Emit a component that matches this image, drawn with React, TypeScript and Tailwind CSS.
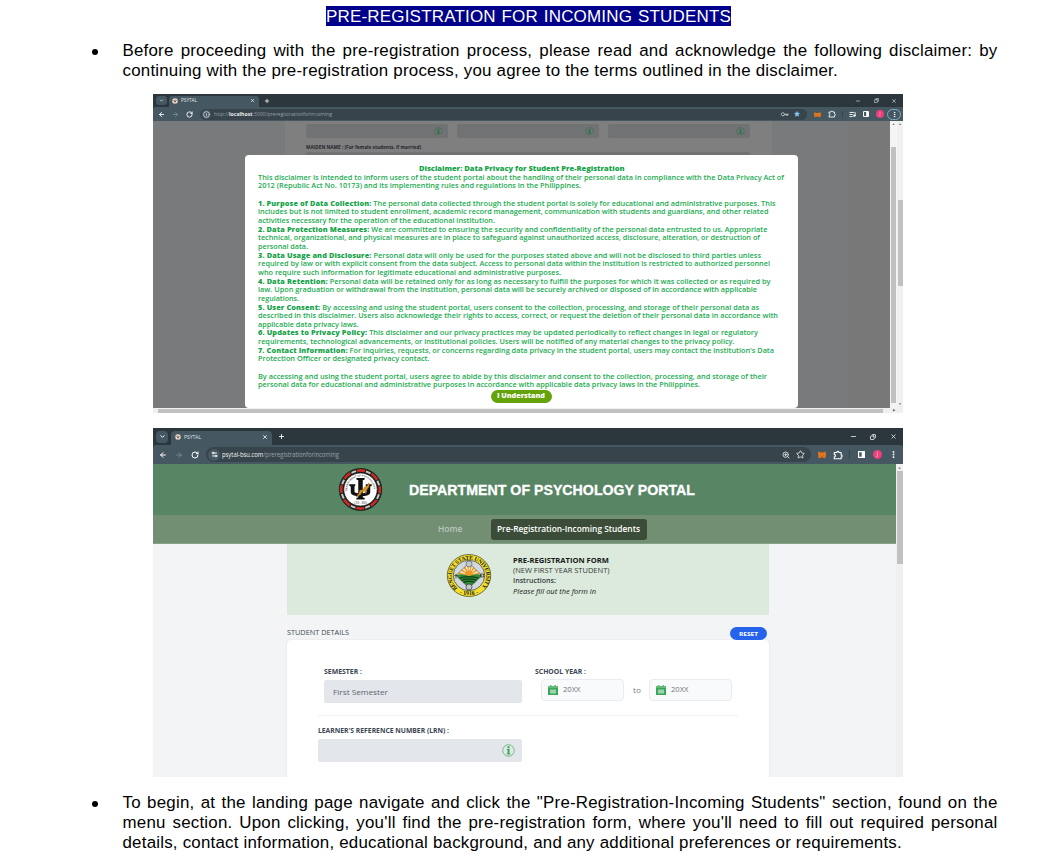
import { useLayoutEffect, useRef, type ReactNode } from "react";
import {
  ArrowLeft, ArrowRight, ChevronDown, Copy, Info, Key, ListMusic, Minus,
  MoreVertical, Plus, RotateCw, Settings2, Star, X, ZoomIn,
} from "lucide-react";

/** One line of text, stretched horizontally to the given width. */
function Fit({ w, className = "", children }: { w: number; className?: string; children: ReactNode }) {
  const ref = useRef<HTMLSpanElement>(null);
  useLayoutEffect(() => {
    const el = ref.current;
    if (!el) return;
    el.style.transform = "none";
    const natural = el.getBoundingClientRect().width;
    if (natural > 0) el.style.transform = `scaleX(${w / natural})`;
  }, [w]);
  return (
    <span className={`block shrink-0 ${className}`} style={{ width: w }}>
      <span ref={ref} className="inline-block origin-left whitespace-pre align-top">
        {children}
      </span>
    </span>
  );
}

const disclaimer: [string, string, number][] = [
  ["", "This disclaimer is intended to inform users of the student portal about the handling of their personal data in compliance with the Data Privacy Act of", 526],
  ["", "2012 (Republic Act No. 10173) and its implementing rules and regulations in the Philippines.", 323],
  ["", "", 0],
  ["1. Purpose of Data Collection:", " The personal data collected through the student portal is solely for educational and administrative purposes. This", 517.5],
  ["", "includes but is not limited to student enrollment, academic record management, communication with students and guardians, and other related", 510.5],
  ["", "activities necessary for the operation of the educational institution.", 237],
  ["2. Data Protection Measures:", " We are committed to ensuring the security and confidentiality of the personal data entrusted to us. Appropriate", 509.5],
  ["", "technical, organizational, and physical measures are in place to safeguard against unauthorized access, disclosure, alteration, or destruction of", 502],
  ["", "personal data.", 50],
  ["3. Data Usage and Disclosure:", " Personal data will only be used for the purposes stated above and will not be disclosed to third parties unless", 503],
  ["", "required by law or with explicit consent from the data subject. Access to personal data within the institution is restricted to authorized personnel", 512],
  ["", "who require such information for legitimate educational and administrative purposes.", 303],
  ["4. Data Retention:", " Personal data will be retained only for as long as necessary to fulfill the purposes for which it was collected or as required by", 512.5],
  ["", "law. Upon graduation or withdrawal from the institution, personal data will be securely archived or disposed of in accordance with applicable", 499],
  ["", "regulations.", 41],
  ["5. User Consent:", " By accessing and using the student portal, users consent to the collection, processing, and storage of their personal data as", 501],
  ["", "described in this disclaimer. Users also acknowledge their rights to access, correct, or request the deletion of their personal data in accordance with", 520],
  ["", "applicable data privacy laws.", 100.5],
  ["6. Updates to Privacy Policy:", " This disclaimer and our privacy practices may be updated periodically to reflect changes in legal or regulatory", 500],
  ["", "requirements, technological advancements, or institutional policies. Users will be notified of any material changes to the privacy policy.", 476.5],
  ["7. Contact Information:", " For inquiries, requests, or concerns regarding data privacy in the student portal, users may contact the institution's Data", 516],
  ["", "Protection Officer or designated privacy contact.", 171.5],
  ["", "", 0],
  ["", "By accessing and using the student portal, users agree to abide by this disclaimer and consent to the collection, processing, and storage of their", 509],
  ["", "personal data for educational and administrative purposes in accordance with applicable data privacy laws in the Philippines.", 442],
];

function FoxIcon({ className }: { className: string }) {
  return (
    <svg viewBox="0 0 16 14" preserveAspectRatio="none" className={className}>
      <path d="M1 1l5 2h4l5-2 1 6-1 3 1 3-4 1-2-1H6l-2 1-4-1 1-3-1-3z" fill="#e8761b" />
      <path d="M4 7l2 1-2 1zM12 7l-2 1 2 1zM6 11h4l-1 2H7z" fill="#9a4c12" />
    </svg>
  );
}

function ExtensionIcon({ className }: { className: string }) {
  return (
    <svg viewBox="0 0 16 16" className={className}>
      <path d="M2 4h4a1.800 1.800 0 0 1 3.600 0H13v3.800a1.700 1.700 0 0 1 0 3.400V14H2v-3a2 2 0 0 0 0-4z" fill="none" stroke="currentColor" strokeWidth="1.700" strokeLinejoin="round" />
    </svg>
  );
}

function SidePanelIcon({ className }: { className: string }) {
  return (
    <svg viewBox="0 0 8 8" className={className}>
      <path d="M.7.7h6.600v6.600H.7z" fill="none" stroke="#fff" strokeWidth="1.300" />
      <path d="M4.200 1h3v6h-3z" fill="#fff" />
    </svg>
  );
}

function Favicon({ className }: { className: string }) {
  return (
    <svg viewBox="0 0 12 12" className={className}>
      <circle cx="6" cy="6" r="5.4" fill="#fff" stroke="#b5877c" strokeWidth="1.2" />
      <path d="M6 2.5v7M3.5 4v1.5q0 1.5 2.5 1.5t2.5-1.5V4" stroke="#5a3b20" strokeWidth="1.5" fill="none" />
    </svg>
  );
}

function InfoBadge({ className }: { className: string }) {
  return (
    <svg viewBox="0 0 14 14" preserveAspectRatio="none" className={className}>
      <circle cx="7" cy="7" r="6.2" fill="none" stroke="currentColor" strokeWidth="0.7" />
      <path d="M5.2 5.400h2.900v4.800h.9v1.100H5.100v-1.100h.9V6.500h-.8zM5.900 2.500h2.200v2H5.900z" fill="currentColor" />
    </svg>
  );
}

function PsychologySeal() {
  return (
    <svg viewBox="0 0 60 58" preserveAspectRatio="none" className="h-[43px] w-[45px]">
      <defs>
        <path id="dept" d="M12.500 31a17.600 17.600 0 1 1 35 0" />
      </defs>
      <circle cx="30" cy="29" r="28.500" fill="#20201f" />
      <circle cx="30" cy="29" r="25.800" fill="none" stroke="#c92a22" strokeWidth="3.600" strokeDasharray="11 9.260" strokeDashoffset="5.500" />
      <circle cx="30" cy="29" r="25.400" fill="none" stroke="#c9c8c3" strokeWidth="2.600" strokeDasharray="6.500 13.450" strokeDashoffset="-6.700" />
      <circle cx="30" cy="29" r="28.300" fill="none" stroke="#1d2a22" strokeWidth="1.200" />
      <circle cx="30" cy="29" r="22.300" fill="#fff" stroke="#111" strokeWidth="1" />
      <text fill="#555" fontSize="3.400" fontFamily="Liberation Sans" fontWeight="700">
        <textPath href="#dept" textLength="56">DEPARTMENT OF PSYCHOLOGY</textPath>
      </text>
      <text x="30" y="48.500" textAnchor="middle" fill="#555" fontSize="3.600" fontFamily="Liberation Sans">CSS - BSU</text>
      <path d="M24.500 13.500h11v2l-2.500 1v23l2.500 1v2h-11v-2l2.500-1v-23l-2.500-1z" fill="#111" />
      <path d="M15 22h8v2l-1 1v7q0 2 8 2t8-2v-7l-1-1v-2h8v2l-2 1v8q0 5-13 5t-13-5v-8l-2-1z" fill="#111" />
      <path d="M41 20l-2 4-4 2-1 3-5 1-1 4-4 5 6-3 2-4 4-1 1 4 1-5 3-4 1-4z" fill="#d9951f" stroke="#8a5a10" strokeWidth="0.500" />
    </svg>
  );
}

function UniversitySeal() {
  return (
    <svg viewBox="0 0 60 58" preserveAspectRatio="none" className="h-[43px] w-[46px]">
      <defs>
        <path id="uni" d="M15 46.500a22.300 22.300 0 1 1 30 0" />
        <clipPath id="diamond"><path d="M30 12L47 29 30 46 13 29z" /></clipPath>
      </defs>
      <circle cx="30" cy="29" r="28.300" fill="#f4df2b" stroke="#4a4a20" strokeWidth="1" />
      <circle cx="30" cy="29" r="20.500" fill="#d0d9e0" stroke="#444" strokeWidth="1" />
      <text fill="#222" fontSize="7.600" fontFamily="Liberation Serif" fontWeight="700">
        <textPath href="#uni" textLength="104">BENGUET STATE UNIVERSITY</textPath>
      </text>
      <text x="30" y="55.500" textAnchor="middle" fill="#222" fontSize="7.500" fontFamily="Liberation Serif" fontWeight="700">· 1916 ·</text>
      <g clipPath="url(#diamond)">
        <rect x="12" y="10" width="36" height="38" fill="#f4f0e2" />
        <path d="M30 29L13 27v-4zM30 29L14 20l3-4zM30 29L19 13l4-3zM30 29L26 9h3zM30 29L32 9h4zM30 29L38 11l4 3zM30 29L44 16l3 4zM30 29L48 23v4z" fill="#f0a02e" />
        <circle cx="30" cy="27" r="5" fill="#ef9726" />
        <path d="M12 29q9-4 18 1 9-5 18-1v19H12z" fill="#2e8b34" />
        <path d="M16 33q14-5 28 0M18 36q12-5 24 0M21 39q9-5 18 0" stroke="#123f18" strokeWidth="1.600" fill="none" />
      </g>
      <path d="M30 12L47 29 30 46 13 29z" fill="none" stroke="#555" strokeWidth="0.800" />
      <circle cx="30" cy="13.500" r="4" fill="#c2c7ca" stroke="#555" strokeWidth="0.800" />
      <circle cx="30" cy="44.500" r="4" fill="#c2c7ca" stroke="#333" strokeWidth="0.900" />
      <path d="M13 27v6M11 29h4M45 27h4v4h-4z" stroke="#333" strokeWidth="1" fill="none" />
    </svg>
  );
}

function SmallBrowserBar() {
  return (
    <div className="h-[27px] bg-[#2b373d] text-white">
      <div className="flex h-[13px] items-center">
        <div className="ml-[3px] flex h-[9px] w-[11px] items-center justify-center rounded-[3px] bg-[#455862]"><ChevronDown className="size-[5px]" strokeWidth={3} /></div>
        <div className="mt-[2px] ml-[2px] flex h-[11px] w-[90px] items-center rounded-t-[3px] bg-[#455862] pb-[2px]">
          <Favicon className="ml-[3px] size-[6px]" />
          <Fit w={16} className="ml-[3px] text-[5px] leading-[7px] text-[#e1e5e7]">PSYTAL</Fit>
          <X className="ml-[53px] size-[5px]" strokeWidth={3} />
        </div>
        <Plus className="ml-[5px] size-[6px]" strokeWidth={3} />
        <Minus className="ml-[585px] size-[6px]" />
        <Copy className="ml-[13px] size-[5px] -scale-x-100" strokeWidth={2.500} />
        <X className="ml-[12px] size-[6px]" />
      </div>
      <div className="flex h-[14px] items-center rounded-t-[2px] bg-[#455862]">
        <ArrowLeft className="ml-[5px] size-[7px]" strokeWidth={3} />
        <ArrowRight className="ml-[7px] size-[7px] text-[#93a2aa]" />
        <RotateCw className="ml-[7px] size-[7px]" strokeWidth={3} />
        <div className="ml-[7px] flex h-[11px] w-[607px] items-center rounded-full bg-[#37444b]">
          <div className="ml-[2px] flex size-[9px] items-center justify-center rounded-full bg-[#455862]"><Info className="size-[7px] text-[#e1e5e7]" strokeWidth={2.500} /></div>
          <Fit w={118} className="ml-[3px] text-[5px] leading-[7px] text-[#94a1a8]">http://<b className="text-[#e6eaec]">localhost</b>:3000/preregistrationforincoming</Fit>
          <Key className="ml-[449px] size-[7px] rotate-45 text-[#b7c0c5]" strokeWidth={3} />
          <Star className="ml-[6px] size-[6px] fill-[#7cc7e8] text-[#7cc7e8]" />
        </div>
        <FoxIcon className="ml-[7px] h-[5px] w-[7px]" />
        <ExtensionIcon className="ml-[7px] size-[8px]" />
        <div className="ml-[6px] h-[7px] w-px bg-[#37444b]" />
        <ListMusic className="ml-[6px] size-[7px]" strokeWidth={3} />
        <SidePanelIcon className="ml-[7px] size-[6px]" />
        <div className="ml-[7px] flex size-[8px] items-center justify-center rounded-full bg-[#ec407a] text-[4px]">J</div>
        <div className="ml-[3px] flex h-[11px] w-[14px] items-center justify-center rounded-full border border-[#7fb0c0]"><MoreVertical className="size-[7px]" strokeWidth={3} /></div>
      </div>
    </div>
  );
}

function DimField({ className }: { className: string }) {
  return (
    <div className={`flex items-center justify-end rounded-[2px] bg-[#707274] ${className}`}>
      <InfoBadge className="mr-[5px] h-[8px] w-[9px] text-[#21753f]" />
    </div>
  );
}

function DisclaimerShot() {
  return (
    <div className="relative ml-[153px] h-[319px] w-[750px] overflow-hidden font-['Open_Sans',sans-serif]">
      <SmallBrowserBar />
      <div className="flex h-[287px]">
        <div className="w-[132px] bg-[#797a7c]" />
        <div className="w-[487px] bg-[#7f7f7f] pt-[3px] pl-[21px]">
          <div className="flex gap-[9px]">
            <DimField className="h-[14px] w-[142px]" />
            <DimField className="h-[14px] w-[142px]" />
            <DimField className="h-[14px] w-[142px]" />
          </div>
          <Fit w={115} className="mt-[5px] text-[5px] leading-[8px] font-bold text-[#23272c]">MAIDEN NAME : (For female students, if married)</Fit>
          <div className="mt-[1px] h-[14px] w-[444px] rounded-[2px] bg-[#707274]" />
        </div>
        <div className="w-[76px] bg-[#797a7c]" />
        <div className="w-[42px] bg-[#787878]" />
        <div className="w-[7px] bg-[#f4f4f4]">
          <div className="flex h-[6px] items-center justify-center text-[3px] text-[#555]">▲</div>
          <div className="mx-auto mt-[20px] h-[256px] w-[5px] bg-[#c1c1c1]" />
        </div>
        <div className="w-[6px] bg-[#f0f0f0]">
          <div className="flex h-[6px] items-center justify-center text-[3px] text-[#555]">▲</div>
          <div className="mx-auto mt-[73px] h-[86px] w-[5px] bg-[#c1c1c1]" />
          <div className="mt-[115px] flex h-[6px] items-center justify-center text-[3px] text-[#555]">▼</div>
        </div>
      </div>
      <div className="flex h-[5px] items-center justify-between bg-[#f0f0f0] pr-[8px] pl-[5px]">
        <div className="h-[4px] w-[725px] bg-[#c1c1c1]" />
        <span className="text-[3px] text-[#555]">▶</span>
      </div>
      <div className="absolute top-[61px] left-[92px] flex h-[253px] w-[553px] flex-col rounded-[4px] bg-white pt-[10px] pl-[12.600px] text-[6.200px] leading-[8.660px] font-semibold text-[#22ab51]">
        <Fit w={205.500} className="ml-[161px] h-[8.660px] font-extrabold text-[#16a34a]">Disclaimer: Data Privacy for Student Pre-Registration</Fit>
        {disclaimer.map(([head, text, w], i) => (
          <div key={i} className="h-[8.660px] shrink-0">
            {w > 0 && <Fit w={w}>{head && <b className="font-extrabold tracking-[0.08px] text-[#16a34a]">{head}</b>}{text}</Fit>}
          </div>
        ))}
        <button className="-mt-[0.500px] ml-[233.400px] flex h-[13.500px] w-[61px] shrink-0 items-center justify-center rounded-full bg-[#65a30d] font-extrabold text-white">
          <Fit w={48} className="text-left">I Understand</Fit>
        </button>
      </div>
    </div>
  );
}

function BrowserBar() {
  return (
    <div className="h-[36px] bg-[#2b373d] text-white">
      <div className="flex h-[17px] items-center">
        <div className="ml-[3px] flex h-[12px] w-[12px] items-center justify-center rounded-[4px] bg-[#455862]"><ChevronDown className="size-[7px]" strokeWidth={3} /></div>
        <div className="mt-[3px] ml-[3px] flex h-[14px] w-[101px] items-center rounded-t-[4px] bg-[#455862] pb-[3px]">
          <Favicon className="ml-[4px] size-[6px]" />
          <Fit w={17} className="ml-[3px] text-[6px] leading-[8px] text-[#dfe4e6]">PSYTAL</Fit>
          <X className="ml-[61px] size-[6px]" strokeWidth={3} />
        </div>
        <Plus className="ml-[6px] size-[7px]" strokeWidth={3} />
        <Minus className="ml-[565px] size-[7px]" strokeWidth={2.500} />
        <Copy className="ml-[13px] size-[6px] -scale-x-100" strokeWidth={3} />
        <X className="ml-[14px] size-[7px]" strokeWidth={2.500} />
      </div>
      <div className="flex h-[19px] items-center rounded-t-[3px] bg-[#455862]">
        <ArrowLeft className="ml-[6px] size-[8px]" strokeWidth={3} />
        <ArrowRight className="ml-[8px] size-[8px] text-[#8d9ba2]" />
        <RotateCw className="ml-[8px] size-[8px]" strokeWidth={3} />
        <div className="ml-[7px] flex h-[15px] w-[605px] items-center rounded-full bg-[#37444b]">
          <div className="ml-[2px] flex size-[12px] items-center justify-center rounded-full bg-[#455862]"><Settings2 className="size-[7px]" strokeWidth={3} /></div>
          <Fit w={117} className="ml-[2px] text-[7px] leading-[10px] text-[#98a4aa]"><span className="text-[#f1f3f4]">psytal-bsu.com</span>/preregistrationforincoming</Fit>
          <ZoomIn className="ml-[443px] size-[8px] text-[#ced5d8]" strokeWidth={3} />
          <Star className="ml-[6px] size-[9px]" />
        </div>
        <FoxIcon className="ml-[7px] h-[7px] w-[8px]" />
        <ExtensionIcon className="ml-[7px] size-[10px]" />
        <div className="ml-[6px] h-[9px] w-px bg-[#37444b]" />
        <SidePanelIcon className="ml-[8px] size-[7px]" />
        <div className="ml-[8px] flex size-[9px] items-center justify-center rounded-full bg-[#ec407a] text-[5px]">J</div>
        <MoreVertical className="ml-[7px] size-[9px]" strokeWidth={3} />
      </div>
    </div>
  );
}

function YearInput() {
  return (
    <div className="flex h-[22px] w-[83px] items-center rounded-[4px] border border-[#e9ebee] bg-[#f9fafb]">
      <svg viewBox="0 0 10 10" className="ml-[6px] size-[10px]">
        <path d="M0 1h2V0h1.500v1h3V0H8v1h2v2H0z" fill="#63ba79" /><path d="M0 3h10v7H0z" fill="#3aa55a" /><path d="M2 4.500h6v4H2z" fill="#9fd3ab" />
      </svg>
      <Fit w={17.500} className="ml-[5px] text-[7px] leading-[10px] font-normal text-[#6f7681]">20XX</Fit>
    </div>
  );
}

function PortalShot() {
  return (
    <div className="mt-[15px] ml-[153px] h-[349px] w-[750px] overflow-hidden font-['Open_Sans',sans-serif]">
      <BrowserBar />
      <div className="flex h-[313px]">
        <div className="w-[743px] bg-[#f3f4f6]">
          <header className="flex h-[51px] items-center bg-[#588564]">
            <div className="ml-[185px]"><PsychologySeal /></div>
            <Fit w={286} className="ml-[26px] font-['Liberation_Sans',sans-serif] text-[14.500px] leading-[20px] font-bold text-white [-webkit-text-stroke:0.300px_white]">DEPARTMENT OF PSYCHOLOGY PORTAL</Fit>
          </header>
          <nav className="flex h-[29px] items-center border-b border-[#84a086] bg-[#728f73] text-[8px] leading-[12px] font-semibold">
            <Fit w={24.500} className="ml-[285px] text-[#b9c6bf]">Home</Fit>
            <div className="ml-[28px] flex h-[21px] w-[156px] items-center justify-center rounded-[3px] bg-[#3b4d39] text-white"><Fit w={143}>Pre-Registration-Incoming Students</Fit></div>
          </nav>
          <section className="ml-[134px] flex h-[71px] w-[482px] bg-[#dce9dd]">
            <div className="mt-[9.500px] ml-[159px] w-[46px]"><UniversitySeal /></div>
            <div className="mt-[11.500px] ml-[21px] text-[7px] leading-[10.400px] text-[#333b39]">
              <Fit w={96} className="font-bold text-[#151a18]">PRE-REGISTRATION FORM</Fit>
              <Fit w={96.500}>(NEW FIRST YEAR STUDENT)</Fit>
              <Fit w={43} className="font-semibold">Instructions:</Fit>
              <Fit w={83} className="text-[#151a18] italic">Please fill out the form in</Fit>
            </div>
          </section>
          <div className="ml-[134px] flex h-[25px] w-[482px] items-end justify-between pr-[2px]">
            <Fit w={62} className="mb-[2px] text-[7px] leading-[10px] text-[#414853]">STUDENT DETAILS</Fit>
            <button className="flex h-[13px] w-[37px] items-center justify-center rounded-full bg-[#2563eb] text-[6px] leading-[8px] font-bold text-white"><Fit w={19} className="text-left">RESET</Fit></button>
          </div>
          <section className="ml-[134px] h-[137px] w-[482px] rounded-t-[4px] bg-white pt-[27px] shadow-[0_0_2px_#d8dce0]">
            <div className="flex pl-[37px] text-[6.300px] leading-[9px] font-bold text-[#3c4552]">
              <div className="w-[197.500px]">
                <Fit w={38}>SEMESTER :</Fit>
                <div className="mt-[4px] flex h-[23px] items-center rounded-[2px] bg-[#e3e6ea] pl-[9px] text-[8px] leading-[12px] font-normal text-[#5c6572]"><Fit w={55}>First Semester</Fit></div>
              </div>
              <div className="ml-[13px]">
                <Fit w={51}>SCHOOL YEAR :</Fit>
                <div className="mt-[3px] ml-[6.500px] flex items-center">
                  <YearInput />
                  <Fit w={8} className="ml-[9px] text-[8px] leading-[12px] font-normal text-[#7c838d]">to</Fit>
                  <div className="ml-[8px]"><YearInput /></div>
                </div>
              </div>
            </div>
            <div className="mt-[12px] ml-[31px] h-px w-[420px] bg-[#f1f2f4]" />
            <div className="mt-[10px] ml-[31px] text-[6.300px] leading-[9px] font-bold text-[#3c4552]">
              <Fit w={131}>LEARNER'S REFERENCE NUMBER (LRN) :</Fit>
              <div className="mt-[4px] flex h-[23px] w-[204px] items-center justify-end rounded-[2px] bg-[#e3e6ea] pr-[7px]"><InfoBadge className="size-[13px] text-[#34a853]" /></div>
            </div>
          </section>
        </div>
        <div className="w-[7px] bg-[#f0f0f0]">
          <div className="flex h-[7px] items-center justify-center text-[4px] text-[#888]">▲</div>
          <div className="mx-auto h-[93px] w-[6px] bg-[#c1c1c1]" />
        </div>
      </div>
    </div>
  );
}

function Bullet({ lines, last }: { lines: string[]; last: string }) {
  return (
    <div className="flex text-[16.900px] leading-[20px] tracking-[0.215px]">
      <div className="flex h-[20px] w-[122.500px] items-center pl-[92px]"><span className="mt-px size-[6px] rounded-full bg-black" /></div>
      <div className="w-[875px]">
        {lines.map((line) => <div key={line} className="whitespace-nowrap [text-align-last:justify]">{line}</div>)}
        <div className="whitespace-nowrap">{last}</div>
      </div>
    </div>
  );
}

export default function App() {
  return (
    <main className="h-[862px] w-[1054px] overflow-hidden bg-white pt-[6px] font-['Liberation_Sans',Arial,sans-serif] text-black">
      <h1 className="ml-[326px] h-[20px] w-[405px] bg-[#00008b] text-[17px] leading-[22px] tracking-[0.18px] whitespace-nowrap text-white [text-align-last:justify]">PRE-REGISTRATION FOR INCOMING STUDENTS</h1>
      <div className="mt-[15px]">
        <Bullet
          lines={["Before proceeding with the pre-registration process, please read and acknowledge the following disclaimer: by"]}
          last="continuing with the pre-registration process, you agree to the terms outlined in the disclaimer."
        />
      </div>
      <div className="mt-[13px]">
        <DisclaimerShot />
        <PortalShot />
      </div>
      <div className="mt-[16px]">
        <Bullet
          lines={[
            "To begin, at the landing page navigate and click the \"Pre-Registration-Incoming Students\" section, found on the",
            "menu section. Upon clicking, you'll find the pre-registration form, where you'll need to fill out required personal",
          ]}
          last="details, contact information, educational background, and any additional preferences or requirements."
        />
      </div>
    </main>
  );
}
